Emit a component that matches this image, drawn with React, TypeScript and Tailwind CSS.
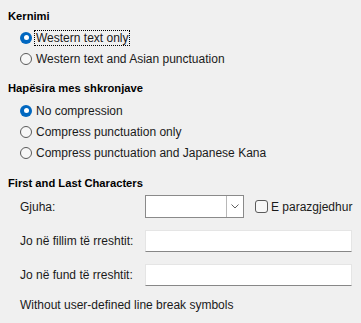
const font = { fontFamily: '"Liberation Sans", Arial, sans-serif' }

function Radio({ checked, label, focus }: { checked?: boolean; label: string; focus?: boolean }) {
  return (
    <div className="flex items-center h-[21px] pl-3">
      {checked ? (
        <span className="w-3 h-3 rounded-full bg-[#0067c0] flex items-center justify-center shrink-0">
          <span className="w-[5px] h-[5px] rounded-full bg-white" />
        </span>
      ) : (
        <span className="w-3 h-3 rounded-full border border-[#5a5a5a] bg-[#f7f7f7] shrink-0" />
      )}
      <span
        className={
          'ml-[3px] px-[1px] leading-[14px] text-[12px] text-[#1a1a1a] ' +
          (focus ? 'outline outline-1 outline-dotted outline-black' : '')
        }
      >
        {label}
      </span>
    </div>
  )
}

function Heading({ children, className }: { children: string; className?: string }) {
  return (
    <div className={'h-4 leading-4 text-[11.2px] font-bold text-black ' + (className ?? '')}>{children}</div>
  )
}

export default function App() {
  return (
    <div className="w-[361px] h-[323px] bg-[#f0f0f0] px-2 pt-2 overflow-hidden" style={font}>
      <Heading>Kernimi</Heading>
      <div className="mt-[3px]">
        <Radio checked focus label="Western text only" />
        <Radio label="Western text and Asian punctuation" />
      </div>

      <Heading className="mt-[11px]">Hapësira mes shkronjave</Heading>
      <div className="mt-[4px]">
        <Radio checked label="No compression" />
        <Radio label="Compress punctuation only" />
        <Radio label="Compress punctuation and Japanese Kana" />
      </div>

      <Heading className="mt-[12px]">First and Last Characters</Heading>
      <div className="pl-3 text-[12px] text-[#1a1a1a]">
        <div className="mt-1 flex items-center h-[23px]">
          <span className="w-[125px]">Gjuha:</span>
          <div className="w-[99px] h-[23px] bg-white border border-[#8a8a8a] flex">
            <div className="flex-1" />
            <div className="w-[17px] border-l border-[#b8b8b8] flex items-center justify-center">
              <svg width="8" height="5" viewBox="0 0 8 5">
                <path d="M0.5 0.5 L4 4 L7.5 0.5" fill="none" stroke="#606060" strokeWidth="1" />
              </svg>
            </div>
          </div>
          <span className="ml-[11px] w-[13px] h-[13px] rounded-[3px] border border-[#5a5a5a] bg-[#f7f7f7]" />
          <span className="ml-[3px]">E parazgjedhur</span>
        </div>

        <div className="mt-3 flex items-center h-[22px]">
          <span className="w-[125px]">Jo në fillim të rreshtit:</span>
          <div className="w-[207px] h-[22px] bg-white border border-[#e5e5e5] border-b-[#878787]" />
        </div>

        <div className="mt-3 flex items-center h-[22px]">
          <span className="w-[125px]">Jo në fund të rreshtit:</span>
          <div className="w-[207px] h-[22px] bg-white border border-[#e5e5e5] border-b-[#878787]" />
        </div>

        <div className="mt-[11px] h-4 leading-4">Without user-defined line break symbols</div>
      </div>
    </div>
  )
}
